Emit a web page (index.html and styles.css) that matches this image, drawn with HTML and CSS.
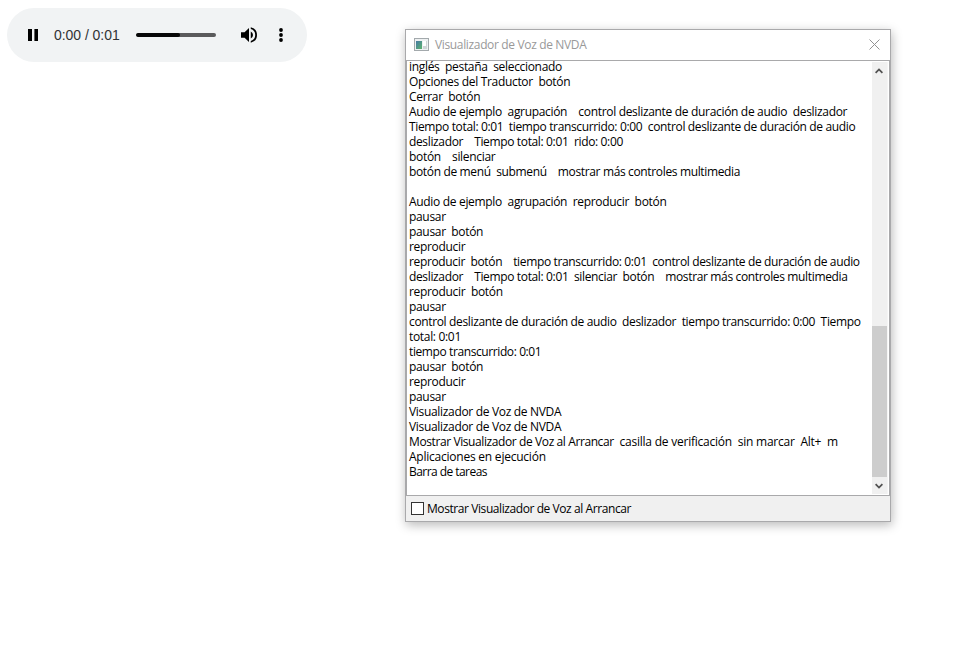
FILE: index.html
```
<!DOCTYPE html>
<html lang="es">
<head>
<meta charset="utf-8">
<title>Visualizador de Voz de NVDA</title>
<link rel="stylesheet" href="styles.css">
</head>
<body>
<main class="desktop">
<section class="player" aria-label="Audio de ejemplo">
<svg class="pause" viewBox="0 0 10 12"><path d="M0 0h4v12H0zM6.400 0h3.600v12H6.400z"/></svg>
<span class="time">0:00 / 0:01</span>
<div class="track"><div class="progress"></div></div>
<svg class="volume" viewBox="3 3 18 18"><path d="M3 9v6h4l5 5V4L7 9zm13.500 3A4.500 4.500 0 0 0 14 7.970v8.050A4.500 4.500 0 0 0 16.500 12zM14 3.230v2.060a7 7 0 0 1 0 13.420v2.060a9 9 0 0 0 0-17.540z"/></svg>
<svg class="more" viewBox="0 0 4 14"><circle cx="2" cy="2" r="1.900"/><circle cx="2" cy="7" r="1.900"/><circle cx="2" cy="12" r="1.900"/></svg>
</section>
<section class="window">
<header class="titlebar">
<svg class="app-icon" viewBox="0 0 15 13"><defs><linearGradient id="screen" x2="1" y2="1"><stop stop-color="#477aa5"/><stop offset="1" stop-color="#5bb36b"/></linearGradient></defs><path fill="#a3a9ac" d="M0 0h15v13H0z"/><path fill="#eef1f2" d="M1 1h13v11H1z"/><path fill="url(#screen)" d="M2 3h6v8H2z"/><path fill="#d0d5d7" d="M9 3h4v8H9z"/><path fill="#fff" d="M9 3h3v5H9z"/></svg>
<h1 class="title">Visualizador de Voz de NVDA</h1>
<svg class="close" viewBox="0 0 11 11"><path d="M.5.500l10 10M10.500.500l-10 10"/></svg>
</header>
<div class="content">
<div class="log"><p>inglés  pestaña  seleccionado</p>
<p>Opciones del Traductor  botón</p>
<p>Cerrar  botón</p>
<p>Audio de ejemplo  agrupación    control deslizante de duración de audio  deslizador</p>
<p class="timed">Tiempo total: 0:01  tiempo transcurrido: 0:00  control deslizante de duración de audio</p>
<p class="timed">deslizador    Tiempo total: 0:01  rido: 0:00</p>
<p>botón    silenciar</p>
<p class="timed">botón de menú  submenú    mostrar más controles multimedia</p>
<p></p>
<p>Audio de ejemplo  agrupación  reproducir  botón</p>
<p>pausar</p>
<p>pausar  botón</p>
<p>reproducir</p>
<p class="timed">reproducir  botón    tiempo transcurrido: 0:01  control deslizante de duración de audio</p>
<p class="timed">deslizador    Tiempo total: 0:01  silenciar  botón    mostrar más controles multimedia</p>
<p>reproducir  botón</p>
<p>pausar</p>
<p class="timed">control deslizante de duración de audio  deslizador  tiempo transcurrido: 0:00  Tiempo</p>
<p>total: 0:01</p>
<p class="short">tiempo transcurrido: 0:01</p>
<p>pausar  botón</p>
<p>reproducir</p>
<p>pausar</p>
<p>Visualizador de Voz de NVDA</p>
<p>Visualizador de Voz de NVDA</p>
<p><span class="short">Mostrar Visualizador de Voz al Arrancar</span><span class="wide">  casilla de verificación  sin marcar  Alt+  m</span></p>
<p class="wide">Aplicaciones en ejecución</p>
<p class="last">Barra de tareas</p></div>
<div class="scrollbar">
<svg class="arrow up" viewBox="0 0 8 6"><path d="M.6 4.800L4 1.400l3.400 3.400"/></svg>
<div class="thumb"></div>
<svg class="arrow down" viewBox="0 0 8 6"><path d="M.6 1.200L4 4.600l3.400-3.400"/></svg>
</div>
</div>
<footer class="footer"><span class="box"></span><span>Mostrar Visualizador de Voz al Arrancar</span></footer>
</section>
</main>
</body>
</html>
```
FILE: styles.css
```
* { box-sizing: border-box; }
body { margin: 0; background: #fff; font-family: "Open Sans", "Noto Sans", sans-serif; }
.desktop { display: flex; align-items: flex-start; height: 671px; padding-left: 7px; }
.player {
  display: flex; align-items: center; width: 300px; height: 54px; margin-top: 8px;
  padding-left: 21px; border-radius: 27px; background: #f1f3f4;
}
.pause { width: 10px; height: 12px; }
.time { width: 67px; margin-left: 16px; font: 14px/20px "Liberation Sans", sans-serif; letter-spacing: -.05px; color: #303234; white-space: nowrap; }
.track { width: 80px; height: 4px; margin-left: 15px; border-radius: 2px; background: #5a5a5b; overflow: hidden; }
.progress { width: 44px; height: 4px; border-radius: 2px; background: #070707; }
.volume { width: 16px; height: 16px; margin-left: 25px; }
.more { width: 4px; height: 14px; margin-left: 22px; }
.window {
  display: flex; flex-direction: column; width: 486px; height: 493px;
  margin: 29px 0 0 98px; border: 1px solid #a9a9ab; background: #fff;
  box-shadow: 1px 3px 10px rgba(0, 0, 0, .28);
}
.titlebar { display: flex; align-items: center; height: 30px; flex: none; padding: 0 10px 0 8px; }
.app-icon { width: 15px; height: 13px; margin-top: -2px; }
.title { flex: 1; margin: 0 0 0 6px; font-size: 12px; font-weight: 400; line-height: 18px; letter-spacing: -.35px; color: #999; }
.close { width: 11px; height: 11px; margin-top: -2px; fill: none; stroke: #929292; stroke-width: 1; }
.content {
  display: flex; height: 436px; flex: none; border: 1px solid #a9a9ab;
  padding: 1px 1px 1px 0; overflow: hidden;
}
.log {
  display: flex; flex-direction: column; flex: 1; padding-left: 2px; margin-top: -3px;
  white-space: pre; font-size: 12px; line-height: 15px; letter-spacing: -.32px; color: #000;
}
.log p { height: 15px; flex: none; margin: 0; }
.timed { letter-spacing: -.353px; }
.short { letter-spacing: -.4px; }
.wide { letter-spacing: -.23px; }
.last { letter-spacing: -.55px; }
.scrollbar { display: flex; flex-direction: column; width: 16px; height: 432px; background: #f0f0f0; border-right: 1px solid #f5f5f5; }
.arrow { width: 8px; height: 6px; margin: 6px 0 0 3px; fill: none; stroke: #505050; stroke-width: 1.800; }
.thumb { height: 151px; margin-top: 252px; background: #cdcdcd; }
.footer { display: flex; align-items: center; flex: 1; padding-left: 5px; background: #f0f0f0; font-size: 12px; line-height: 15px; letter-spacing: -.42px; }
.box { width: 13px; height: 13px; margin-right: 3px; border: 1px solid #333; background: #fff; }
```
